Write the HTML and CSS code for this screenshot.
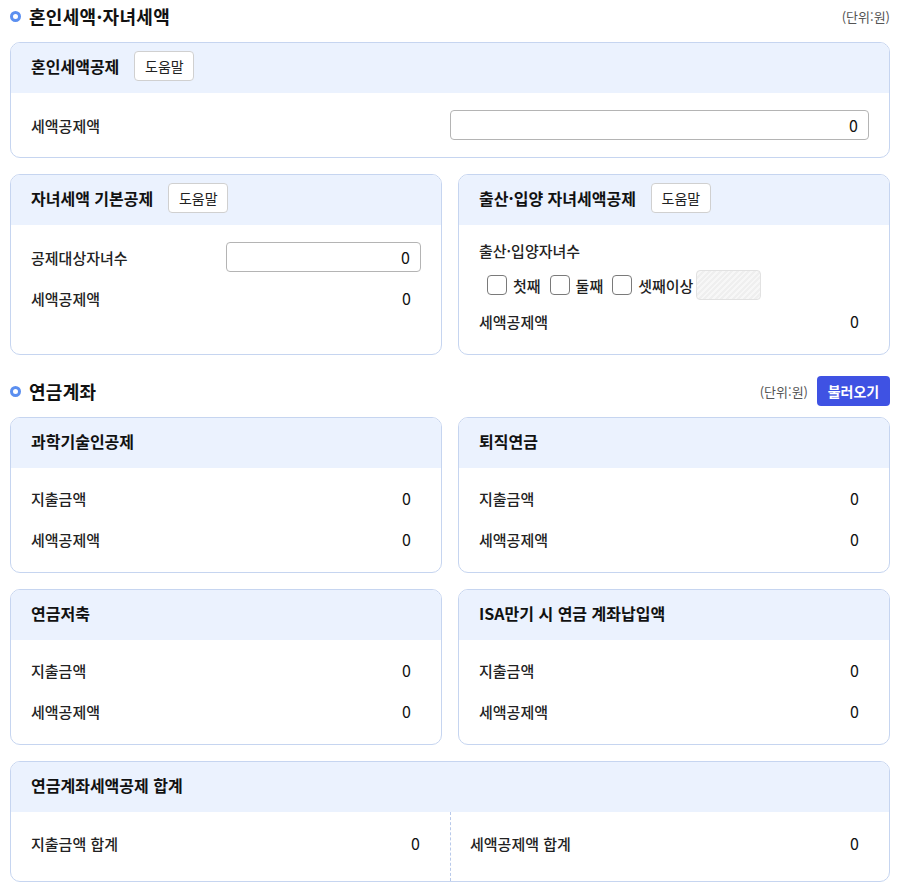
FILE: index.html
```
<!DOCTYPE html>
<html lang="ko">
<head>
<meta charset="utf-8">
<title>혼인세액·자녀세액 / 연금계좌</title>
<link rel="stylesheet" href="styles.css">
</head>
<body>
<div class="page">
  <section class="sec">
    <div class="sec-head">
      <h2 class="sec-title"><span class="ring"></span>혼인세액·자녀세액</h2>
      <div class="sec-tools"><span class="unit">(단위:원)</span></div>
    </div>
    <div class="card">
      <div class="card-head"><h3 class="card-title">혼인세액공제</h3><button class="help" type="button">도움말</button></div>
      <div class="card-body body-single">
        <div class="row"><span class="label">세액공제액</span><input class="num-input" type="text" value="0"></div>
      </div>
    </div>
    <div class="grid2 mt16">
      <div class="card">
        <div class="card-head"><h3 class="card-title">자녀세액 기본공제</h3><button class="help" type="button">도움말</button></div>
        <div class="card-body body-single">
          <div class="row"><span class="label">공제대상자녀수</span><input class="num-input" type="text" value="0"></div>
          <div class="row gap11"><span class="label">세액공제액</span><span class="value">0</span></div>
        </div>
      </div>
      <div class="card">
        <div class="card-head"><h3 class="card-title">출산·입양 자녀세액공제</h3><button class="help" type="button">도움말</button></div>
        <div class="card-body body-birth">
          <div class="label line">출산·입양자녀수</div>
          <div class="checks">
            <label class="chk"><span class="box"></span>첫째</label>
            <label class="chk"><span class="box"></span>둘째</label>
            <label class="chk"><span class="box"></span>셋째이상</label>
            <span class="disabled-field"></span>
          </div>
          <div class="row birth-value"><span class="label">세액공제액</span><span class="value">0</span></div>
        </div>
      </div>
    </div>
  </section>

  <section class="sec sec2">
    <div class="sec-head">
      <h2 class="sec-title"><span class="ring"></span>연금계좌</h2>
      <div class="sec-tools"><span class="unit">(단위:원)</span><button class="load" type="button">불러오기</button></div>
    </div>
    <div class="grid2">
      <div class="card">
        <div class="card-head"><h3 class="card-title">과학기술인공제</h3></div>
        <div class="card-body body-pair">
          <div class="row"><span class="label">지출금액</span><span class="value">0</span></div>
          <div class="row gap11"><span class="label">세액공제액</span><span class="value">0</span></div>
        </div>
      </div>
      <div class="card">
        <div class="card-head"><h3 class="card-title">퇴직연금</h3></div>
        <div class="card-body body-pair">
          <div class="row"><span class="label">지출금액</span><span class="value">0</span></div>
          <div class="row gap11"><span class="label">세액공제액</span><span class="value">0</span></div>
        </div>
      </div>
      <div class="card">
        <div class="card-head"><h3 class="card-title">연금저축</h3></div>
        <div class="card-body body-pair">
          <div class="row"><span class="label">지출금액</span><span class="value">0</span></div>
          <div class="row gap11"><span class="label">세액공제액</span><span class="value">0</span></div>
        </div>
      </div>
      <div class="card">
        <div class="card-head"><h3 class="card-title">ISA만기 시 연금 계좌납입액</h3></div>
        <div class="card-body body-pair">
          <div class="row"><span class="label">지출금액</span><span class="value">0</span></div>
          <div class="row gap11"><span class="label">세액공제액</span><span class="value">0</span></div>
        </div>
      </div>
    </div>
    <div class="card mt16">
      <div class="card-head"><h3 class="card-title">연금계좌세액공제 합계</h3></div>
      <div class="card-body body-total">
        <div class="total-col"><div class="row"><span class="label">지출금액 합계</span><span class="value">0</span></div></div>
        <div class="total-col right"><div class="row"><span class="label">세액공제액 합계</span><span class="value">0</span></div></div>
      </div>
    </div>
  </section>
</div>
</body>
</html>
```
FILE: styles.css
```
* { box-sizing: border-box; }
html, body { margin: 0; padding: 0; background: #fff; }
body {
  font-family: "Noto Sans CJK KR", "Noto Sans", "Liberation Sans", sans-serif;
  color: #222;
}
.page { width: 880px; margin: 0 0 0 10px; padding-top: 1px; }

.sec-head {
  height: 30px;
  display: flex;
  align-items: center;
  justify-content: space-between;
  margin-bottom: 11px;
}
.sec2 { margin-top: 21px; }
.sec-title {
  margin: 0;
  display: flex;
  align-items: center;
  font-size: 18px;
  font-weight: 700;
  color: #111;
  letter-spacing: 0.3px;
}
.ring {
  width: 11px; height: 11px;
  border: 3px solid #5b8ff0;
  border-radius: 50%;
  margin-right: 8px;
  flex: none;
}
.sec-tools { display: flex; align-items: center; gap: 9px; }
.unit { font-size: 13px; color: #555; }
.load {
  height: 30px;
  width: 73px;
  border: 0;
  border-radius: 4px;
  background: #3f52e3;
  color: #fff;
  font-family: inherit;
  font-size: 14px;
  font-weight: 700;
  padding: 0;
}

.card {
  border: 1px solid #c6d5f0;
  border-radius: 10px;
  overflow: hidden;
  background: #fff;
  display: flex;
  flex-direction: column;
}
.card-head {
  height: 50px;
  background: #ebf2fe;
  display: flex;
  align-items: center;
  padding: 8px 20px 12px;
}
.card-title {
  margin: 0;
  font-size: 16px;
  font-weight: 700;
  color: #111;
}
.help {
  margin-left: 15px;
  height: 30px;
  width: 60px;
  padding: 0;
  border: 1px solid #d0d0d0;
  border-radius: 4px;
  background: #fff;
  font-family: inherit;
  font-size: 14px;
  color: #222;
}
.mt16 { margin-top: 16px; }
.grid2 {
  display: grid;
  grid-template-columns: 1fr 1fr;
  gap: 16px;
}

.card-body { flex: 1; padding: 0 20px; }
.body-single { padding-top: 17px; padding-bottom: 17px; }
.body-pair { padding-top: 15px; padding-bottom: 18px; }
.body-birth { padding-top: 16px; padding-bottom: 18px; }

.row {
  display: grid;
  grid-template-columns: 1fr 1fr;
  align-items: center;
  height: 30px;
}
.gap11 { margin-top: 11px; }
.label {
  font-size: 15px;
  font-weight: 500;
  color: #222;
}
.line { line-height: 20px; height: 20px; }
.value {
  text-align: right;
  padding-right: 10px;
  font-size: 16px;
  color: #111;
}
.num-input {
  width: 100%;
  height: 30px;
  border: 1px solid #b4b4b4;
  border-radius: 4px;
  text-align: right;
  padding: 0 10px;
  font-family: inherit;
  font-size: 16px;
  color: #111;
  background: #fff;
}

.checks {
  display: flex;
  align-items: center;
  height: 30px;
  margin-top: 9px;
  padding-left: 8px;
}
.chk {
  display: flex;
  align-items: center;
  font-size: 15px;
  font-weight: 500;
  color: #222;
  margin-right: 9px;
}
.chk:last-of-type { margin-right: 3px; }
.box {
  width: 20px; height: 20px;
  border: 1px solid #7a7a7a;
  border-radius: 4px;
  margin-right: 6px;
  background: #fff;
}
.disabled-field {
  width: 65px; height: 30px;
  border: 1px solid #e2e2e2;
  border-radius: 4px;
  background: repeating-linear-gradient(135deg, #efefef 0 2px, #f7f7f7 2px 4px);
}
.birth-value { margin-top: 6px; }

.body-total {
  display: grid;
  grid-template-columns: 1fr 1fr;
  padding: 0;
}
.total-col { padding: 16px 20px 23px; }
.total-col.right { border-left: 1px dashed #b8c9ea; padding-left: 19px; }
```
